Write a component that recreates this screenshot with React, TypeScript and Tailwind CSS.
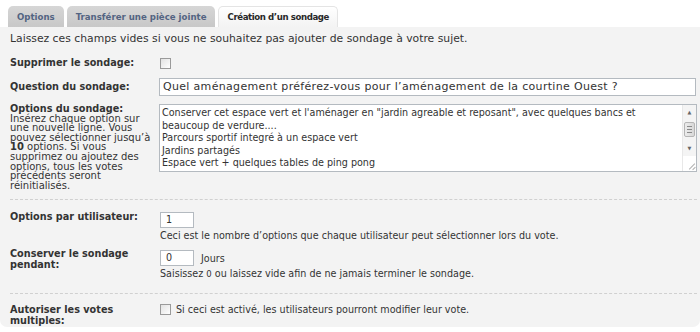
import React from 'react';

const tabs = ['Options', 'Transférer une pièce jointe', 'Création d’un sondage'];

const pollOptions = [
  'Conserver cet espace vert et l\'aménager en "jardin agreable et reposant", avec quelques bancs et',
  'beaucoup de verdure....',
  'Parcours sportif integré à un espace vert',
  'Jardins partagés',
  'Espace vert + quelques tables de ping pong',
];

const explainLines: React.ReactNode[] = [
  'Insérez chaque option sur',
  'une nouvelle ligne. Vous',
  'pouvez sélectionner jusqu’à',
  <>
    <b>10</b> options. Si vous
  </>,
  'supprimez ou ajoutez des',
  'options, tous les votes',
  'précédents seront',
  'réinitialisés.',
];

function Checkbox() {
  return <span className="block h-[11px] w-[11px] shrink-0 border border-[#9a9a9a] bg-gradient-to-br from-[#e2e2e2] to-white" />;
}

function Label({ children }: { children: React.ReactNode }) {
  return <div className="w-[149px] shrink-0 text-[9.7px] font-bold leading-[11px] text-[#333]">{children}</div>;
}

function Scrollbar() {
  return (
    <div className="flex w-[14px] shrink-0 flex-col border-l border-[#e8e8e8] bg-[#f4f4f4]">
      <div className="flex h-[15px] items-center justify-center text-[5px] text-[#666]">▲</div>
      <div className="mx-[1px] mt-[2px] flex h-[15px] flex-col items-center justify-center gap-[2px] rounded-[2px] border border-[#b5b5b5] bg-gradient-to-r from-[#ececec] to-[#d8d8d8]">
        <span className="h-px w-[5px] bg-[#8a8a8a]" />
        <span className="h-px w-[5px] bg-[#8a8a8a]" />
        <span className="h-px w-[5px] bg-[#8a8a8a]" />
      </div>
      <div className="flex-1" />
      <div className="flex h-[15px] items-center justify-center text-[5px] text-[#666]">▼</div>
      <div className="relative h-[15px] bg-white">
        <span className="absolute bottom-[4px] right-[0px] h-px w-[8px] -rotate-45 bg-[#b0b0b0]" />
        <span className="absolute bottom-[2px] right-[0px] h-px w-[4px] -rotate-45 bg-[#b0b0b0]" />
      </div>
    </div>
  );
}

export default function App() {
  return (
    <div className="h-[332px] w-[700px] overflow-hidden bg-white font-['DejaVu_Sans',Verdana,sans-serif] text-[#333]">
      <div className="flex gap-[3px] pl-[8px] pt-[6px]">
        {tabs.map((t, i) => (
          <div
            key={t}
            className={
              i === 2
                ? 'flex h-[21px] items-center rounded-t-[5px] border border-b-0 border-[#e4e4e4] bg-gradient-to-b from-white to-[#f3f3f3] px-[8px] pt-px text-[8.6px] font-bold tracking-[-0.4px] text-[#282828]'
                : 'flex h-[21px] items-center rounded-t-[5px] bg-gradient-to-b from-[#d6d6d6] to-[#c8c8c8] px-[9px] pt-px text-[8.6px] font-bold text-[#536482]'
            }
          >
            {t}
          </div>
        ))}
      </div>
      <div className="flex h-[300px] flex-col rounded-b-[7px] bg-[#f3f3f3] pl-[10px] pr-[3px] pt-[5px]">
        <p className="text-[10.8px] leading-[14px]">Laissez ces champs vides si vous ne souhaitez pas ajouter de sondage à votre sujet.</p>

        <div className="mt-[11px] flex items-start">
          <Label>Supprimer le sondage:</Label>
          <div className="pl-px pt-px">
            <Checkbox />
          </div>
        </div>

        <div className="mt-[9px] flex items-start">
          <Label>
            <div className="pt-[3px]">Question du sondage:</div>
          </Label>
          <div className="mr-px flex h-[18px] flex-1 items-center border border-[#b4bac0] bg-white pl-[3px] text-[11px] tracking-[0.32px]">
            Quel aménagement préférez-vous pour l’aménagement de la courtine Ouest ?
          </div>
        </div>

        <div className="mt-[8px] flex items-start">
          <div className="w-[149px] shrink-0 leading-[9.6px]">
            <div className="text-[9.7px] font-bold">Options du sondage:</div>
            <div className="whitespace-nowrap text-[10px]">
              {explainLines.map((l, i) => (
                <div key={i}>{l}</div>
              ))}
            </div>
          </div>
          <div className="flex h-[68px] flex-1 border border-[#b4bac0] bg-white">
            <div className="flex-1 overflow-hidden pl-[2px] pt-[2px] text-[9.6px] leading-[12.5px]">
              {pollOptions.map((o) => (
                <div key={o} className="whitespace-nowrap">{o}</div>
              ))}
            </div>
            <Scrollbar />
          </div>
        </div>

        <div className="mt-[9px] border-t border-dashed border-[#d0d0d0]" />

        <div className="mt-[10px] flex items-start">
          <Label>
            <div className="pt-px">Options par utilisateur:</div>
          </Label>
          <div className="pl-px pt-[2px] text-[9.6px]">
            <div className="h-[16px] w-[34px] border border-[#b4bac0] bg-white pl-[5px] leading-[14px]">1</div>
            <div className="mt-[2px] leading-[12px]">Ceci est le nombre d’options que chaque utilisateur peut sélectionner lors du vote.</div>
          </div>
        </div>

        <div className="mt-[6px] flex items-start">
          <Label>Conserver le sondage pendant:</Label>
          <div className="pl-px pt-px text-[9.6px]">
            <div className="flex items-center gap-[7px]">
              <div className="h-[16px] w-[34px] border border-[#b4bac0] bg-white pl-[5px] leading-[14px]">0</div>
              <span className="pt-[3px]">Jours</span>
            </div>
            <div className="mt-px leading-[12px]">
              Saisissez <span className="text-[8.5px]">0</span> ou laissez vide afin de ne jamais terminer le sondage.
            </div>
          </div>
        </div>

        <div className="mt-[13px] border-t border-dashed border-[#d0d0d0]" />

        <div className="mt-[10px] flex items-start">
          <Label>Autoriser les votes multiples:</Label>
          <div className="flex items-center gap-[5px] pl-px text-[9.6px] leading-[11px]">
            <Checkbox />
            <span>Si ceci est activé, les utilisateurs pourront modifier leur vote.</span>
          </div>
        </div>
      </div>
    </div>
  );
}
